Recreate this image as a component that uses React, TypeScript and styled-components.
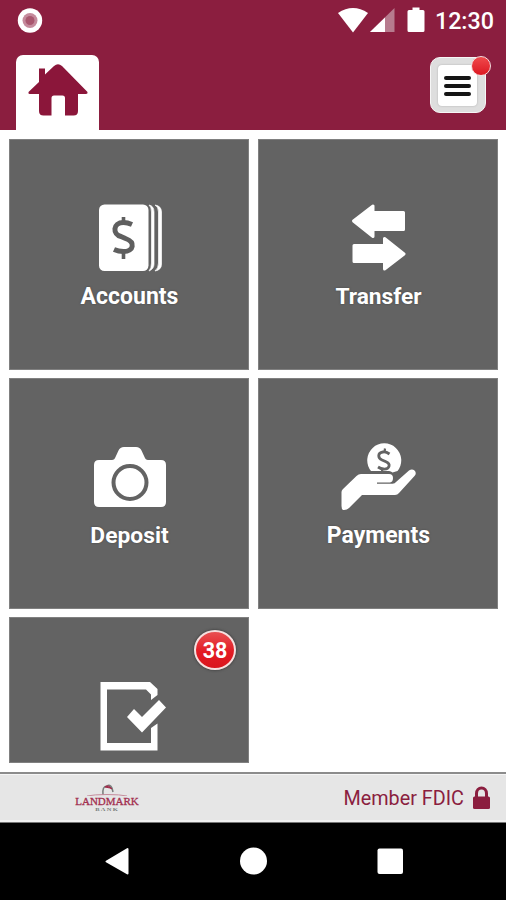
import React from "react";
import styled, { createGlobalStyle } from "styled-components";

const maroon = "#8b1e3f";
const slate = "#636363";

const GlobalStyle = createGlobalStyle`
  * { box-sizing: border-box; }
  body { margin: 0; background: #fff; font-family: Roboto, "Liberation Sans", sans-serif; }
  svg { display: block; flex: none; }
`;

const Screen = styled.div`
  width: 506px;
  height: 900px;
  display: flex;
  flex-direction: column;
  overflow: hidden;
  background: #fff;
`;

const StatusBar = styled.div`
  height: 42px;
  flex: none;
  display: flex;
  align-items: center;
  justify-content: space-between;
  padding: 0 12px 0 16px;
  background: ${maroon};
`;

const StatusRight = styled.div`
  display: flex;
  align-items: center;
`;

const Clock = styled.span`
  width: 59px;
  margin-left: 8px;
  color: #fff;
  font-size: 23.3px;
  font-weight: 500;
  line-height: 42px;
  white-space: nowrap;
  display: flex;
  justify-content: flex-end;
`;

const AppBar = styled.header`
  height: 88px;
  flex: none;
  display: flex;
  justify-content: space-between;
  padding: 13px 20px 0 16px;
  background: ${maroon};
`;

const HomeTab = styled.button`
  width: 83px;
  height: 75px;
  padding: 0;
  border: 0;
  border-radius: 7px 7px 0 0;
  background: #fff;
`;

const MenuButton = styled.button`
  position: relative;
  width: 56px;
  height: 56px;
  margin-top: 2px;
  padding: 7px;
  border: 1px solid #f6f6f6;
  border-radius: 10px;
  background: #dedede;
`;

const MenuFace = styled.span`
  width: 39px;
  height: 41px;
  display: flex;
  flex-direction: column;
  align-items: center;
  justify-content: center;
  gap: 4px;
  padding-top: 1px;
  border-radius: 4px;
  background: #fff;
  box-shadow: 0 0 2px #aaa;
`;

const MenuLine = styled.span`
  width: 27px;
  height: 4px;
  border-radius: 2px;
  background: #151515;
`;

const Dot = styled.span`
  position: absolute;
  top: -2px;
  right: -6px;
  width: 20px;
  height: 20px;
  border: 1.5px solid #f3dcdc;
  border-radius: 50%;
  background: linear-gradient(#f04a4c, #dc1822);
`;

const Grid = styled.main`
  height: 642px;
  flex: none;
  display: grid;
  grid-template-columns: 240px 240px;
  grid-template-rows: 231px 231px 146px;
  column-gap: 9px;
  row-gap: 8px;
  padding: 9px;
`;

const Tile = styled.div`
  position: relative;
  display: flex;
  flex-direction: column;
  align-items: center;
  padding-top: 60px;
  overflow: hidden;
  border: 1px solid #808080;
  background: ${slate};
`;

const Label = styled.span<{ $size: number }>`
  margin: 4px 0 0 1px;
  color: #fff;
  font-size: ${(p) => p.$size}px;
  font-weight: 700;
  line-height: 26px;
  text-shadow: 0 0 2px #444;
`;

const Count = styled.span`
  position: absolute;
  top: 12px;
  right: 12px;
  width: 42px;
  height: 40px;
  display: flex;
  align-items: center;
  justify-content: center;
  border: 2px solid #f6dfdf;
  border-radius: 50%;
  background: linear-gradient(#e85052, #e31b24 55%, #d9141d);
  box-shadow: 0 0 3px #333;
  color: #fff;
  font-size: 21.5px;
  font-weight: 700;
`;

const Footer = styled.footer`
  height: 51px;
  flex: none;
  display: flex;
  align-items: center;
  justify-content: space-between;
  padding: 0 15px 0 70px;
  border-top: 2px solid #8c8c8c;
  border-bottom: 1px solid #777;
  background: #e6e6e6;
  box-shadow: inset 0 1px #f5f5f5, inset 0 -2px #f1f1f1;
`;

const Logo = styled.div`
  width: 74px;
  display: flex;
  flex-direction: column;
  align-items: center;
  font-family: "Liberation Serif", serif;
`;

const LogoName = styled.span`
  color: #a22f4f;
  font-size: 11px;
  font-weight: 400;
  -webkit-text-stroke: 0.3px #a22f4f;
  line-height: 10px;
  white-space: nowrap;
`;

const LogoSub = styled.span`
  margin-top: 1px;
  color: #777c7a;
  font-size: 5px;
  font-weight: 700;
  line-height: 5px;
  letter-spacing: 1px;
  transform: scaleX(1.3);
`;

const Member = styled.div`
  display: flex;
  align-items: center;
  gap: 8px;
  color: ${maroon};
  font-size: 19.8px;
  white-space: nowrap;
`;

const NavBar = styled.nav`
  flex: 1;
  display: flex;
  align-items: flex-start;
  justify-content: space-between;
  padding: 23px 102px 0 103px;
  background: #000;
`;

const AccountsIcon = () => (
  <svg width="120" height="80" viewBox="-1 10 120 80">
    <rect x="29" y="14.5" width="49.5" height="66.5" rx="5.5" fill="#fff" />
    <path d="M79 15Q84 16 84 22V74Q84 79 79 81Q81.500 78 81.500 73V22Q81.500 17 79 15Z M85 15Q91.500 16 91.500 22V74Q91.500 80 85 81Q88.500 78 88.500 73V22Q88.500 17 85 15Z" fill="#fff" stroke="#fff" strokeWidth=".7" />
    <g fill="none" stroke="#5f5f5f" strokeLinejoin="round">
      <path d="M62 34.500Q57.500 32.500 53.500 32.500C42.500 32.500 42.500 44.500 51 46.500L55.500 48.500C65.500 52 64 61.500 53.500 61.500Q48.500 61.500 44 59.500" strokeWidth="5" />
      <path d="M53.500 27V33M53.500 61V69" strokeWidth="3.600" />
    </g>
  </svg>
);

const TransferIcon = () => (
  <svg width="120" height="80" viewBox="-2 10 120 80">
    <g fill="#fff" stroke="#fff" strokeWidth="3" strokeLinejoin="round">
      <path d="M33.500 31L53 16V22.500H83.500V39.500H53V46.500Z" />
      <path d="M84 64L64.500 48.500V55.500H34V71.500H64.500V79Z" />
    </g>
  </svg>
);

const CameraIcon = () => (
  <svg width="120" height="80" viewBox="-1 9 120 80">
    <path d="M29 30H42Q44.500 30 45.500 27L48.500 20.500Q50 17 54 17H66Q70 17 71.500 20.500L74.500 27Q75.500 30 78 30H91Q96 30 96 35V72Q96 77 91 77H29Q24 77 24 72V35Q24 30 29 30Z" fill="#fff" />
    <circle cx="60" cy="52.500" r="16.500" fill="#fff" stroke={slate} strokeWidth="4" />
  </svg>
);

const PaymentsIcon = () => (
  <svg width="120" height="80" viewBox="-2 9 120 80">
    <path d="M51 41A17 17 0 1 1 77.500 41L72.500 42.500Q71 41 69 41Z" fill="#fff" />
    <g fill="none" stroke={slate}>
      <path d="M69.500 24Q66 21.500 63 22C57 23 58 28.500 62 30L65.500 31.500C71.500 34 69.500 39.500 63.500 39Q61 39 58 37" strokeWidth="2.800" />
      <path d="M65 18.500L64.500 22.500M62.500 38.500L62 41.500" strokeWidth="2.200" />
    </g>
    <path d="M41 44H69Q73 44 73 48T70 52.500H57V53.700H72.500Q75 53.700 76 52L89 40.500Q92 38.500 94.500 40.500Q97 43 94.500 46L79 63Q77.500 65 75 65H42L29 78Q26.500 80.500 23 80Q21.500 79 21.500 76V62Q21.500 60.500 23 59L36.500 46Q38.500 44 41 44Z" fill="#fff" />
  </svg>
);

const ChecklistIcon = () => (
  <svg width="120" height="80" viewBox="-11 68 120 80">
    <path d="M20.500 72H70L77.500 79V85L71 90V84.500L66 79.500H27V133H71V118L77.500 113.500V140.500H20.500Z" fill="#fff" />
    <path d="M47 107L54 99L62 107L79 90L86 97.500L62 122.500Z" fill="#fff" />
  </svg>
);

const tiles = [
  { label: "Accounts", size: 23, Icon: AccountsIcon },
  { label: "Transfer", size: 22.7, Icon: TransferIcon },
  { label: "Deposit", size: 22.8, Icon: CameraIcon },
  { label: "Payments", size: 23, Icon: PaymentsIcon },
];

export default function App() {
  return (
    <Screen>
      <GlobalStyle />
      <StatusBar>
        <svg width="28" height="28" viewBox="0 0 28 28">
          <circle cx="14" cy="13.500" r="12.200" fill="#fff" />
          <circle cx="14" cy="13.500" r="7.500" fill="#c58a9c" />
          <circle cx="14" cy="13.500" r="4.500" fill="#a9576f" />
        </svg>
        <StatusRight>
          <svg width="90" height="42" viewBox="337 0 90 42">
            <path d="M338 13Q353 3 368 13L353 32.500Z" fill="#fff" />
            <path d="M370 32L394.500 8V32Z" fill="#b77b8e" />
            <path d="M370 32L385 17.500V32Z" fill="#fff" />
            <path d="M412.500 7.500H419.500V10H423Q424.500 10 424.500 11.500V30.500Q424.500 32 423 32H409Q407.500 32 407.500 30.500V11.500Q407.500 10 409 10H412.500Z" fill="#fff" />
          </svg>
          <Clock>12:30</Clock>
        </StatusRight>
      </StatusBar>
      <AppBar>
        <HomeTab aria-label="Home">
          <svg width="83" height="75" viewBox="16 55 83 75">
            <path d="M28.500 92L39 82V68.500H45V74.500L54 66Q58 62.500 62 66L87.500 92Q88 94 86 94H78V111Q78 115.500 73.500 115.500H65V98Q65 95.500 62.500 95.500H54Q51.500 95.500 51.500 98V115.500H43.500Q39 115.500 39 111V94H29.500Q28 94 28.500 92Z" fill="#8b163a" />
          </svg>
        </HomeTab>
        <MenuButton aria-label="Menu">
          <MenuFace>
            <MenuLine />
            <MenuLine />
            <MenuLine />
          </MenuFace>
          <Dot />
        </MenuButton>
      </AppBar>
      <Grid>
        {tiles.map(({ label, size, Icon }) => (
          <Tile key={label}>
            <Icon />
            <Label $size={size}>{label}</Label>
          </Tile>
        ))}
        <Tile>
          <ChecklistIcon />
          <Count>38</Count>
        </Tile>
      </Grid>
      <Footer>
        <Logo>
          <svg width="50" height="12" viewBox="0 0 50 12">
            <path d="M21 11Q20 2 25 2Q28 0 30 4L31 8" fill="none" stroke="#777b79" strokeWidth="1.500" />
            <path d="M23 3Q26 0 30 5L28 4Z" fill="#a02b4a" stroke="#a02b4a" />
            <path d="M5 12Q12 10.500 25 10.500T45 12" fill="none" stroke="#c58c9c" />
          </svg>
          <LogoName>LANDMARK</LogoName>
          <LogoSub>BANK</LogoSub>
        </Logo>
        <Member>
          Member FDIC
          <svg width="19" height="24" viewBox="0 0 19 24">
            <path d="M4.500 12V7.500A5 5.500 0 0 1 14.500 7.500V12" fill="none" stroke={maroon} strokeWidth="3" />
            <rect x="1" y="10.500" width="17" height="12.500" rx="1.500" fill={maroon} />
          </svg>
        </Member>
      </Footer>
      <NavBar>
        <svg width="28" height="30" viewBox="103 846 28 30">
          <path d="M106.500 861.500L127.500 849V873.500Z" fill="#fff" stroke="#fff" strokeWidth="2" strokeLinejoin="round" />
        </svg>
        <svg width="28" height="30" viewBox="239.5 846 28 30">
          <circle cx="253" cy="861" r="13.500" fill="#fff" />
        </svg>
        <svg width="28" height="30" viewBox="376 846 28 30">
          <rect x="377.500" y="848.500" width="25.500" height="25.500" rx="2" fill="#fff" />
        </svg>
      </NavBar>
    </Screen>
  );
}
